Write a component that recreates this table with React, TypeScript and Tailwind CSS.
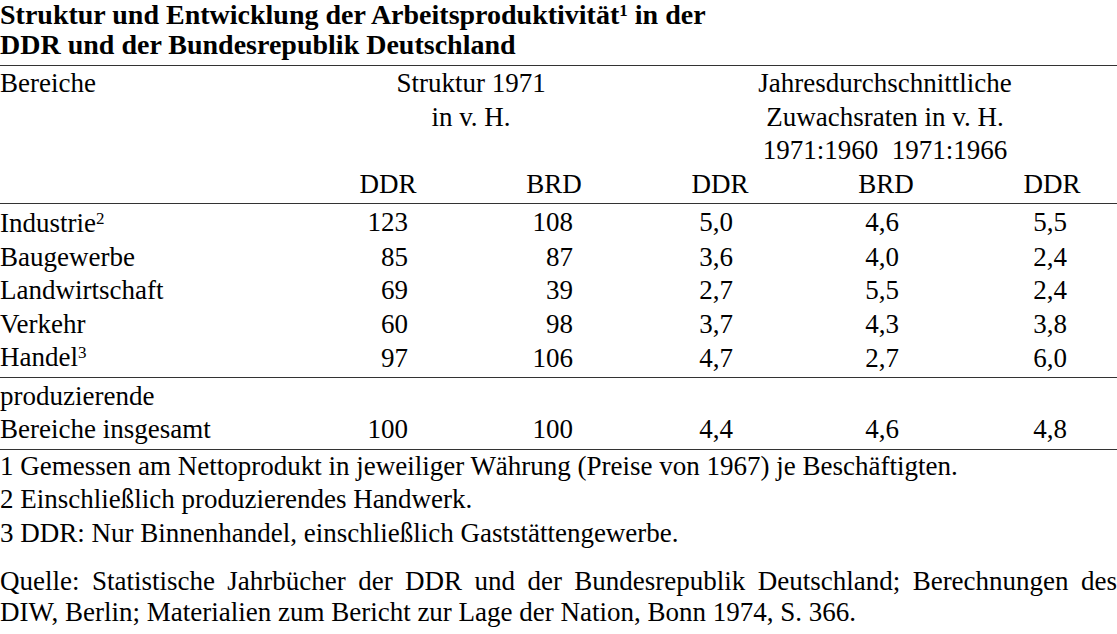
const rows: [string, string | null, string, string, string, string, string][] = [
  ["Industrie", "2", "123", "108", "5,0", "4,6", "5,5"],
  ["Baugewerbe", null, "85", "87", "3,6", "4,0", "2,4"],
  ["Landwirtschaft", null, "69", "39", "2,7", "5,5", "2,4"],
  ["Verkehr", null, "60", "98", "3,7", "4,3", "3,8"],
  ["Handel", "3", "97", "106", "4,7", "2,7", "6,0"],
];

function Sup({ n }: { n: string }) {
  return <sup className="text-[17px] leading-none top-[-0.45em]">{n}</sup>;
}

export default function App() {
  return (
    <div className="w-[1117px] h-[634px] overflow-hidden bg-white text-black font-['Liberation_Serif',serif] text-[27px] leading-[33.5px]">
      <h1 className="font-bold text-[28px] leading-[30px]">
        Struktur und Entwicklung der Arbeitsproduktivität<Sup n="1" /> in der
        <br />
        DDR und der Bundesrepublik Deutschland
      </h1>

      <table className="w-full table-fixed border-collapse mt-[5px]">
        <colgroup>
          <col className="w-[305px]" />
          <col className="w-[166px]" />
          <col className="w-[166px]" />
          <col className="w-[166px]" />
          <col className="w-[166px]" />
          <col className="w-[148px]" />
        </colgroup>
        <thead>
          <tr className="border-t-[1.5px] border-[#333]">
            <th className="text-left font-normal align-top pt-[1px]">Bereiche</th>
            <th colSpan={2} className="font-normal align-top pt-[1px]">
              Struktur 1971
              <br />
              in v. H.
            </th>
            <th colSpan={3} className="font-normal align-top pt-[1px] pl-4">
              Jahresdurchschnittliche
              <br />
              Zuwachsraten in v. H.
              <br />
              1971:1960&nbsp;&nbsp;1971:1966
            </th>
          </tr>
          <tr className="border-b-[1.5px] border-[#333]">
            <th />
            <th className="font-normal pb-[2px]">DDR</th>
            <th className="font-normal pb-[2px]">BRD</th>
            <th className="font-normal pb-[2px]">DDR</th>
            <th className="font-normal pb-[2px]">BRD</th>
            <th className="font-normal pb-[2px] pl-[18px]">DDR</th>
          </tr>
        </thead>
        <tbody className="border-b-[1.5px] border-[#333]">
          {rows.map(([label, sup, a, b, c, d, e], i) => (
            <tr key={label}>
              <td className={i === 0 ? "pt-[3px]" : i === rows.length - 1 ? "pb-[2px]" : ""}>
                {label}
                {sup && <Sup n={sup} />}
              </td>
              <td className="text-right pr-[63px]">{a}</td>
              <td className="text-right pr-[64px]">{b}</td>
              <td className="text-center pr-[8px]">{c}</td>
              <td className="text-center pr-[8px]">{d}</td>
              <td className="text-center pl-[14px]">{e}</td>
            </tr>
          ))}
        </tbody>
        <tbody className="border-b-[1.5px] border-[#333]">
          <tr>
            <td colSpan={6} className="pt-[2px]">produzierende</td>
          </tr>
          <tr>
            <td className="pb-[2px] whitespace-nowrap">Bereiche insgesamt</td>
            <td className="text-right pr-[63px] pb-[2px]">100</td>
            <td className="text-right pr-[64px] pb-[2px]">100</td>
            <td className="text-center pr-[8px] pb-[2px]">4,4</td>
            <td className="text-center pr-[8px] pb-[2px]">4,6</td>
            <td className="text-center pl-[14px] pb-[2px]">4,8</td>
          </tr>
        </tbody>
      </table>

      <div>
        <p>1 Gemessen am Nettoprodukt in jeweiliger Währung (Preise von 1967) je Beschäftigten.</p>
        <p>2 Einschließlich produzierendes Handwerk.</p>
        <p>3 DDR: Nur Binnenhandel, einschließlich Gaststättengewerbe.</p>
      </div>

      <p className="mt-[16px] leading-[31px] text-justify">
        Quelle: Statistische Jahrbücher der DDR und der Bundesrepublik Deutschland; Berechnungen des DIW,
        Berlin; Materialien zum Bericht zur Lage der Nation, Bonn 1974, S. 366.
      </p>
    </div>
  );
}
